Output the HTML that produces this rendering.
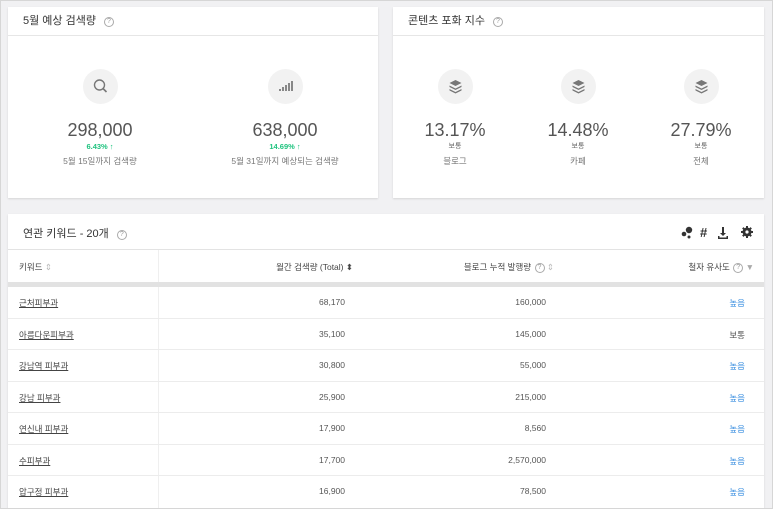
<!DOCTYPE html>
<html><head><meta charset="utf-8"><style>
*{margin:0;padding:0;box-sizing:border-box}
body{width:773px;height:509px;background:#f1f1f3;font-family:"Liberation Sans","Noto Sans CJK KR",sans-serif;position:relative;overflow:hidden;color:#333}
.frame{position:absolute;left:0;top:0;width:773px;height:509px;border:1px solid #d6d6d6;pointer-events:none}
.card{position:absolute;background:#fff;box-shadow:0 1px 2px rgba(0,0,0,.12)}
.ttl{position:absolute;left:15px;top:5px;font-size:11px;color:#333}
.q{display:inline-block;width:10px;height:10px;border:1px solid #aaa;border-radius:50%;font-size:7px;line-height:8px;text-align:center;color:#999;margin-left:8px;vertical-align:1px}
.hl{position:absolute;left:0;right:0;top:28px;border-top:1px solid #e6e6e6}
.item{position:absolute;width:140px;text-align:center}
.ic{width:35px;height:35px;border-radius:50%;background:#f2f2f2;margin:0 auto;position:relative}
.big{font-size:18px;color:#555;margin-top:16px;line-height:20px}
.pct{font-size:7.5px;color:#1fc37f;font-weight:bold;line-height:11px;margin-top:1px}
.sub{font-size:8.5px;color:#777;line-height:12px;margin-top:3px}
.tiny{font-size:7px;color:#666;line-height:11px;margin-top:1px}
.row{position:absolute;left:0;right:0;height:31.5px;border-bottom:1px solid #ececec;font-size:8.5px;color:#555}
.row span{position:absolute;top:10px}
.kw{left:11px;text-decoration:underline;color:#444}
.c1{right:419px}.c2{right:218px}.c3{right:19px;color:#3b8fe0}
</style></head><body>
<div class="card" style="left:8px;top:7px;width:370px;height:191px">
<div class="ttl">5월 예상 검색량<span class="q">?</span></div><div class="hl"></div>
<div class="item" style="left:22px;top:62px"><div class="ic"><svg width="35" height="35"><circle cx="16.5" cy="16" r="5" fill="none" stroke="#777" stroke-width="1.4"/><path d="M20 19.5l3.5 3.5" stroke="#777" stroke-width="1.6"/></svg></div><div class="big">298,000</div><div class="pct">6.43% ↑</div><div class="sub">5월 15일까지 검색량</div></div>
<div class="item" style="left:207px;top:62px"><div class="ic"><svg width="35" height="35"><g fill="#888"><rect x="11" y="20" width="2" height="2"/><rect x="14" y="18" width="2" height="4"/><rect x="17" y="16" width="2" height="6"/><rect x="20" y="14" width="2" height="8"/><rect x="23" y="12" width="2" height="10"/></g></svg></div><div class="big">638,000</div><div class="pct">14.69% ↑</div><div class="sub">5월 31일까지 예상되는 검색량</div></div>
</div>
<div class="card" style="left:393px;top:7px;width:371px;height:191px">
<div class="ttl">콘텐츠 포화 지수<span class="q">?</span></div><div class="hl"></div>
<div class="item" style="left:-8px;top:62px"><div class="ic"><svg width="35" height="35"><g fill="#777"><path d="M17.5 11l6 3-6 3-6-3z"/><path d="M11.5 16.5l6 3 6-3v1.5l-6 3-6-3z"/><path d="M11.5 20l6 3 6-3v1.5l-6 3-6-3z"/></g></svg></div><div class="big">13.17%</div><div class="tiny">보통</div><div class="sub">블로그</div></div>
<div class="item" style="left:115px;top:62px"><div class="ic"><svg width="35" height="35"><g fill="#777"><path d="M17.5 11l6 3-6 3-6-3z"/><path d="M11.5 16.5l6 3 6-3v1.5l-6 3-6-3z"/><path d="M11.5 20l6 3 6-3v1.5l-6 3-6-3z"/></g></svg></div><div class="big">14.48%</div><div class="tiny">보통</div><div class="sub">카페</div></div>
<div class="item" style="left:238px;top:62px"><div class="ic"><svg width="35" height="35"><g fill="#777"><path d="M17.5 11l6 3-6 3-6-3z"/><path d="M11.5 16.5l6 3 6-3v1.5l-6 3-6-3z"/><path d="M11.5 20l6 3 6-3v1.5l-6 3-6-3z"/></g></svg></div><div class="big">27.79%</div><div class="tiny">보통</div><div class="sub">전체</div></div>
</div>
<div class="card" style="left:8px;top:214px;width:756px;height:294px">
<div class="ttl" style="top:11px">연관 키워드 - 20개<span class="q">?</span></div>
<svg style="position:absolute;left:673px;top:10px" width="80" height="16"><g fill="#333"><circle cx="3" cy="10" r="2.3"/><circle cx="8" cy="6" r="3.2"/><circle cx="8" cy="13" r="1.5"/><text x="19" y="13" font-size="13" font-family="Liberation Sans" font-weight="bold">#</text><path d="M41 3h2v6h2l-3 3-3-3h2zM37 12h1.5v1.5h7V12H47v3H37z"/><circle cx="66" cy="8" r="4.5"/></g><g stroke="#333" stroke-width="2"><path d="M66 2v12M60 8h12M61.8 3.8l8.4 8.4M70.2 3.8l-8.4 8.4"/></g><circle cx="66" cy="8" r="1.6" fill="#fff"/></svg>
<div style="position:absolute;left:0;right:0;top:35px;border-top:1px solid #e3e3e3"></div>
<div style="position:absolute;left:150px;top:36px;height:258px;border-left:1px solid #efefef"></div>
<div style="position:absolute;left:0;right:0;top:36px;height:32px;font-size:8.5px;color:#444">
<span style="position:absolute;left:11px;top:11px">키워드 <span style="color:#bbb">⇕</span></span>
<span style="position:absolute;right:411px;top:11px">월간 검색량 (Total) ⬍</span>
<span style="position:absolute;right:210px;top:11px">블로그 누적 발행량 <span class="q" style="margin-left:1px">?</span> <span style="color:#bbb">⇕</span></span>
<span style="position:absolute;right:10px;top:11px">철자 유사도 <span class="q" style="margin-left:1px">?</span> <span style="color:#aaa">▼</span></span>
</div>
<div style="position:absolute;left:0;right:0;top:68px;height:5px;background:#e2e2e2"></div>
<div style="position:absolute;left:0;right:0;top:73px">
<div class="row" style="top:0"><span class="kw">근처피부과</span><span class="c1">68,170</span><span class="c2">160,000</span><span class="c3">높음</span></div>
<div class="row" style="top:31.5px"><span class="kw">아름다운피부과</span><span class="c1">35,100</span><span class="c2">145,000</span><span class="c3" style="color:#555">보통</span></div>
<div class="row" style="top:63px"><span class="kw">강남역 피부과</span><span class="c1">30,800</span><span class="c2">55,000</span><span class="c3">높음</span></div>
<div class="row" style="top:94.5px"><span class="kw">강남 피부과</span><span class="c1">25,900</span><span class="c2">215,000</span><span class="c3">높음</span></div>
<div class="row" style="top:126px"><span class="kw">연신내 피부과</span><span class="c1">17,900</span><span class="c2">8,560</span><span class="c3">높음</span></div>
<div class="row" style="top:157.5px"><span class="kw">수피부과</span><span class="c1">17,700</span><span class="c2">2,570,000</span><span class="c3">높음</span></div>
<div class="row" style="top:189px;border:none"><span class="kw">압구정 피부과</span><span class="c1">16,900</span><span class="c2">78,500</span><span class="c3">높음</span></div>
</div>
</div>
<div class="frame"></div>
</body></html>
